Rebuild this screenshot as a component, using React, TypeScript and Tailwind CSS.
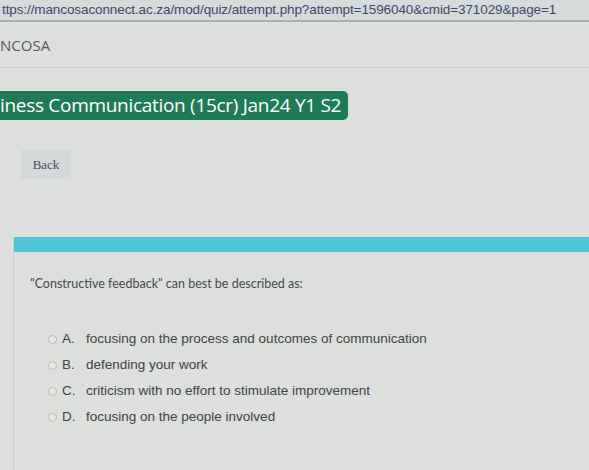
export default function App() {
  const options = [
    { key: 'A.', text: 'focusing on the process and outcomes of communication' },
    { key: 'B.', text: 'defending your work' },
    { key: 'C.', text: 'criticism with no effort to stimulate improvement' },
    { key: 'D.', text: 'focusing on the people involved' },
  ];

  return (
    <div className="h-[470px] w-[589px] overflow-hidden bg-[#dcdfdc] font-['Liberation_Sans',Arial,sans-serif]">
      {/* Address bar */}
      <div className="h-[22px] border-b-2 border-[#a9aeae] bg-[#d6dada] pl-[2px] pt-[1px] text-[13.5px] leading-[18px] tracking-[-0.1px] text-[#3a4a6a]">
        ttps://mancosaconnect.ac.za/mod/quiz/attempt.php?attempt=1596040&amp;cmid=371029&amp;page=1
      </div>

      {/* Site header */}
      <div className="h-[46px] border-b border-[#c9cdcc] pt-[13px] font-['Open_Sans',sans-serif] text-[15px] leading-[20px] text-[#555a5c]">
        NCOSA
      </div>

      <div className="pt-[23px]">
        <div className="inline-flex h-[29px] items-center rounded-r-[5px] bg-[#1f7a57] pr-[7px] font-['Open_Sans',sans-serif] text-[19px] leading-[29px] tracking-[-0.3px] text-white">
          iness Communication (15cr) Jan24 Y1 S2
        </div>
      </div>

      <div className="pl-[21px] pt-[30px]">
        <button className="h-[29px] w-[50px] bg-[#d3d8db] font-['Liberation_Serif',serif] text-[13px] text-[#4a5058]">
          Back
        </button>
      </div>

      {/* Question card */}
      <div className="ml-[13px] mt-[58px] border-l border-[#cdd0cd]">
        <div className="h-[15px] bg-[#4ec4d4]" />
        <div className="pl-[16px] pt-[24px] font-['Lato',sans-serif] text-[12.5px] leading-[16px] text-[#454a4c]">
          "Constructive feedback" can best be described as:
        </div>
        <div className="flex flex-col gap-[10px] pl-[34px] pt-[39px]">
          {options.map((o) => (
            <div key={o.key} className="flex h-[16px] items-center text-[13.5px] text-[#3e4345]">
              <span className="mr-[5px] h-[9px] w-[9px] rounded-full border border-[#b8bcbc] bg-[#e6e8e6]" />
              <span className="w-[24px]">{o.key}</span>
              <span>{o.text}</span>
            </div>
          ))}
        </div>
        <div className="h-[80px]" />
      </div>
    </div>
  );
}
